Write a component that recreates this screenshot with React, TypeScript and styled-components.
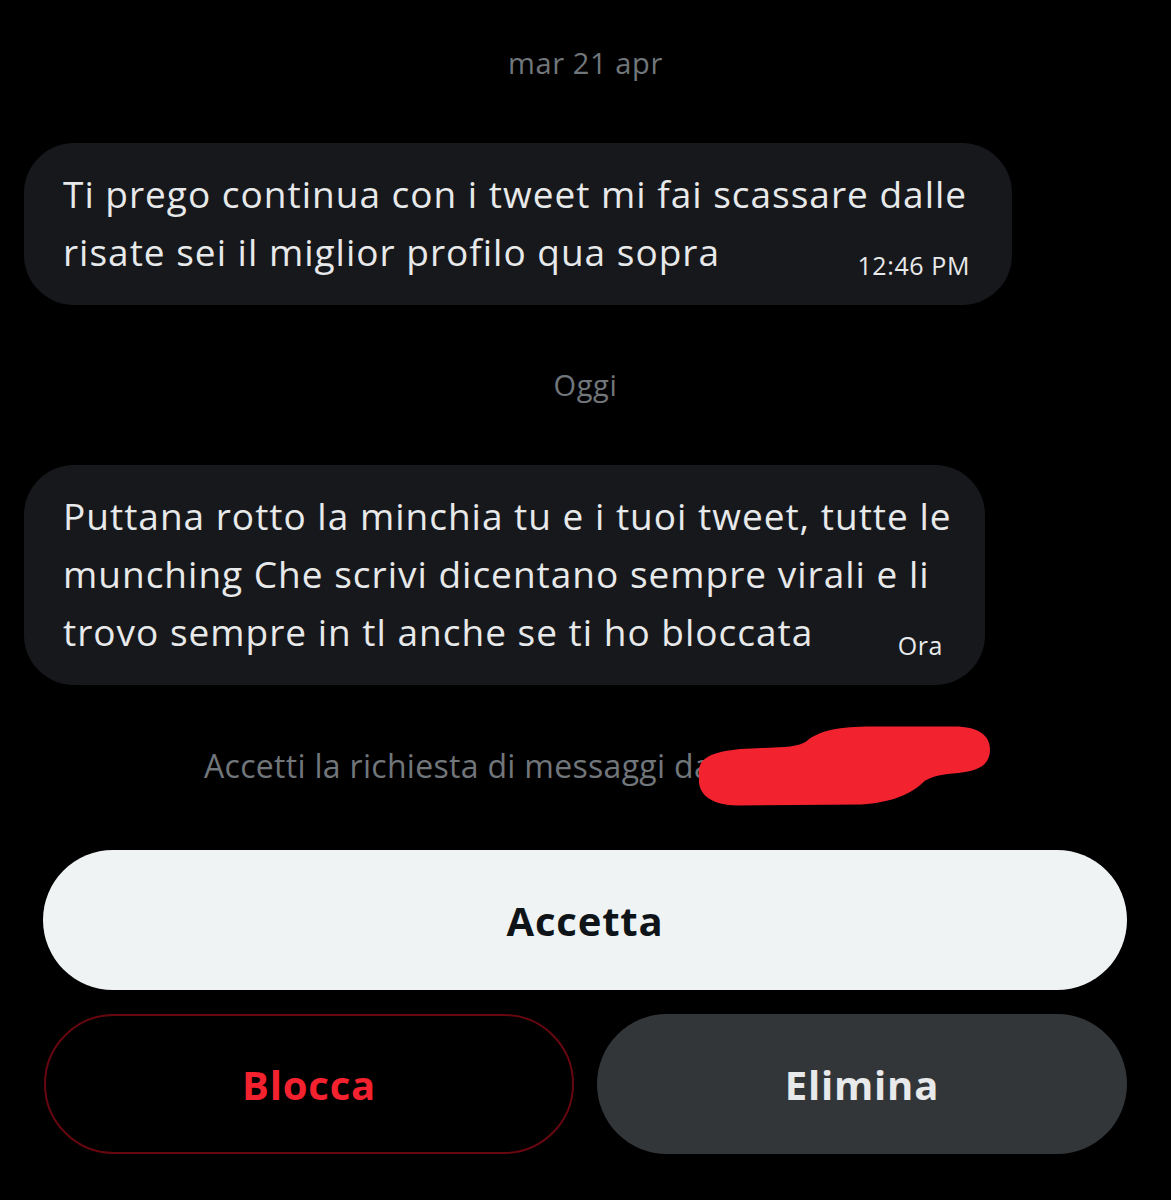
import styled, { createGlobalStyle } from "styled-components";

interface BubbleProps {
  width: number;
}

interface ActionProps {
  variant: "primary" | "danger" | "muted";
}

const GlobalStyle = createGlobalStyle`
  html, body {
    margin: 0;
    padding: 0;
    background: #000;
  }
  body {
    font-family: "Open Sans", "Noto Sans", sans-serif;
    -webkit-font-smoothing: antialiased;
  }
`;

export default function App() {
  return (
    <>
      <GlobalStyle />
      <Page>
        <DayLabel>mar 21 apr</DayLabel>
        <Bubble width={988}>
          <Line>Ti prego continua con i tweet mi fai scassare dalle</Line>
          <LastLine>
            <span>risate sei il miglior profilo qua sopra</span>
            <Time>12:46 PM</Time>
          </LastLine>
        </Bubble>

        <DayLabel>Oggi</DayLabel>
        <Bubble width={961}>
          <Line>Puttana rotto la minchia tu e i tuoi tweet, tutte le</Line>
          <Line>munching Che scrivi dicentano sempre virali e li</Line>
          <LastLine>
            <span>trovo sempre in tl anche se ti ho bloccata</span>
            <Time>Ora</Time>
          </LastLine>
        </Bubble>

        <RequestRow>
          <RequestText>Accetti la richiesta di messaggi da</RequestText>
          {/* scribble hiding the username */}
          <Redaction viewBox="0 0 300 82" width={296} height={82}>
            <path
              d="M3,46 C3,30 24,24 62,23 C88,22 104,22 112,16 C124,5 146,1 178,1 L262,1 C286,1 298,10 298,24 C298,39 288,46 266,48 C250,49 240,51 232,56 C218,70 198,78 168,80 L42,81 C16,81 3,70 3,56 Z"
              fill="#f2222f"
            />
          </Redaction>
        </RequestRow>

        <Actions>
          <ActionButton variant="primary">Accetta</ActionButton>
          <ButtonRow>
            <ActionButton variant="danger">Blocca</ActionButton>
            <ActionButton variant="muted">Elimina</ActionButton>
          </ButtonRow>
        </Actions>
      </Page>
    </>
  );
}

const Page = styled.div`
  width: 1171px;
  min-height: 1200px;
  background: #000;
  display: flex;
  flex-direction: column;
  padding-top: 43px;
  box-sizing: border-box;
`;

const DayLabel = styled.div`
  height: 40px;
  line-height: 40px;
  text-align: center;
  color: #71767b;
  font-size: 29px;
  letter-spacing: 0.6px;
  margin-bottom: 60px;
`;

const Bubble = styled.div<BubbleProps>`
  width: ${p => p.width}px;
  box-sizing: border-box;
  margin-left: 24px;
  margin-bottom: 60px;
  padding: 22px 42px 24px 39px;
  background: #17181c;
  border-radius: 50px;
  color: #e7e9ea;
  font-size: 37px;
  line-height: 58px;
  letter-spacing: 1px;
`;

const Line = styled.div`
  white-space: nowrap;
  height: 58px;
`;

const LastLine = styled.div`
  display: flex;
  justify-content: space-between;
  align-items: baseline;
  white-space: nowrap;
  height: 58px;
`;

const Time = styled.span`
  font-size: 25px;
  letter-spacing: 0.6px;
  color: #e7e9ea;
  position: relative;
  top: 9px;
`;

const RequestRow = styled.div`
  display: flex;
  align-items: center;
  height: 40px;
  padding-left: 204px;
  margin-bottom: 65px;
`;

const RequestText = styled.span`
  color: #71767b;
  font-size: 32px;
  letter-spacing: 0.3px;
  white-space: nowrap;
`;

const Redaction = styled.svg`
  flex-shrink: 0;
  margin-left: -16px;
  margin-top: 2px;
`;

const Actions = styled.div`
  display: flex;
  flex-direction: column;
  gap: 24px;
  padding: 0 44px 0 43px;
`;

const ButtonRow = styled.div`
  display: grid;
  grid-template-columns: 1fr 1fr;
  gap: 23px;
  padding-left: 1px;
`;

const ActionButton = styled.button<ActionProps>`
  height: 140px;
  border-radius: 70px;
  font-family: "Open Sans", "Noto Sans", sans-serif;
  font-size: 40px;
  font-weight: 700;
  letter-spacing: 0.8px;
  cursor: pointer;
  background: ${p =>
    p.variant === "primary" ? "#eff3f4" : p.variant === "muted" ? "#333639" : "#000"};
  color: ${p =>
    p.variant === "primary" ? "#0f1419" : p.variant === "muted" ? "#e7e9ea" : "#f4212e"};
  border: ${p => (p.variant === "danger" ? "2px solid #67070f" : "none")};
`;
